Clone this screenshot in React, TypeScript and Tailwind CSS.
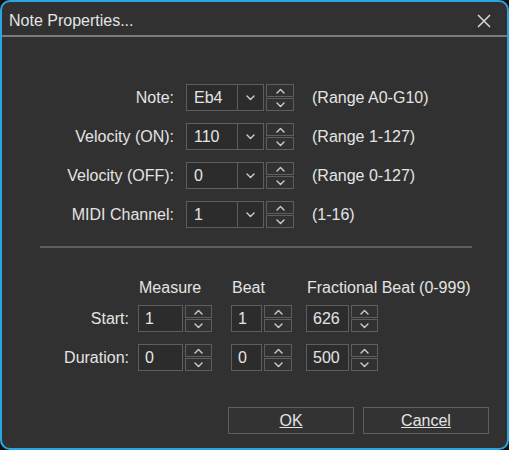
import React from 'react';

const Chevron: React.FC<{ up?: boolean }> = ({ up }) => (
  <svg width="9" height="6" viewBox="0 0 9 6" fill="none">
    <polyline
      points={up ? '1,5 4.5,1.5 8,5' : '1,1 4.5,4.5 8,1'}
      stroke="#cfcfcf"
      strokeWidth="1.4"
      strokeLinecap="round"
      strokeLinejoin="round"
    />
  </svg>
);

const Spinner: React.FC<{ w: string }> = ({ w }) => (
  <div className={`ml-[2px] ${w} h-[27px] flex flex-col gap-[1px]`}>
    <div className="flex-1 border border-[#5e5e5e] flex items-center justify-center">
      <Chevron up />
    </div>
    <div className="flex-1 border border-[#5e5e5e] flex items-center justify-center">
      <Chevron />
    </div>
  </div>
);

const ComboRow: React.FC<{ label: string; value: string; hint: string }> = ({ label, value, hint }) => (
  <div className="flex items-center h-[27px]">
    <div className="w-[172px] text-right">{label}</div>
    <div className="ml-[12px] w-[78px] h-[27px] flex border border-[#5e5e5e] bg-[#2c2c2c]">
      <div className="flex-1 pl-[7px] flex items-center">{value}</div>
      <div className="w-[26px] border-l border-[#5e5e5e] flex items-center justify-center">
        <Chevron />
      </div>
    </div>
    <Spinner w="w-[28px]" />
    <div className="ml-[18px]">{hint}</div>
  </div>
);

const Field: React.FC<{ value: string; w: string; ml: string }> = ({ value, w, ml }) => (
  <div className={`${ml} ${w} h-[27px] border border-[#5e5e5e] bg-[#2c2c2c] pl-[6px] flex items-center`}>
    {value}
  </div>
);

const TimeRow: React.FC<{ label: string; m: string; b: string; f: string }> = ({ label, m, b, f }) => (
  <div className="flex items-center h-[27px]">
    <div className="w-[127px] text-right">{label}</div>
    <Field value={m} w="w-[45px]" ml="ml-[9px]" />
    <Spinner w="w-[27px]" />
    <Field value={b} w="w-[31px]" ml="ml-[19px]" />
    <Spinner w="w-[28px]" />
    <Field value={f} w="w-[43px]" ml="ml-[14px]" />
    <Spinner w="w-[27px]" />
  </div>
);

export default function App() {
  return (
    <div className="w-[509px] h-[450px] bg-[#111]">
      <div className="w-full h-full rounded-[10px] border-2 border-[#2ba4e4] bg-[#313131] flex flex-col font-['Liberation_Sans',Arial,sans-serif] text-[16px] leading-[18px] text-[#e4e4e4]">
        <div className="h-[33px] flex items-center justify-between pl-[7px] pr-[16px]">
          <span className="pt-[4px]">Note Properties...</span>
          <svg width="14" height="14" viewBox="0 0 14 14" className="mt-[4px]">
            <path d="M1 1 L13 13 M13 1 L1 13" stroke="#d8d8d8" strokeWidth="1.5" />
          </svg>
        </div>
        <div className="h-[2px] bg-[#7c7c7c]" />

        <div className="mt-[47px] flex flex-col gap-[12px]">
          <ComboRow label="Note:" value="Eb4" hint="(Range A0-G10)" />
          <ComboRow label="Velocity (ON):" value="110" hint="(Range 1-127)" />
          <ComboRow label="Velocity (OFF):" value="0" hint="(Range 0-127)" />
          <ComboRow label="MIDI Channel:" value="1" hint="(1-16)" />
        </div>

        <div className="mt-[18px] ml-[38px] w-[432px] h-[2px] bg-[#5e5e5e]" />

        <div className="mt-[31px] flex pl-[137px]">
          <span className="w-[93px]">Measure</span>
          <span className="w-[75px]">Beat</span>
          <span>Fractional Beat (0-999)</span>
        </div>

        <div className="mt-[8px] flex flex-col gap-[12px]">
          <TimeRow label="Start:" m="1" b="1" f="626" />
          <TimeRow label="Duration:" m="0" b="0" f="500" />
        </div>

        <div className="mt-auto pb-[14px] pr-[18px] flex justify-end gap-[9px]">
          <button className="w-[126px] h-[27px] border border-[#5e5e5e] bg-[#333] underline">OK</button>
          <button className="w-[126px] h-[27px] border border-[#5e5e5e] bg-[#333] underline">Cancel</button>
        </div>
      </div>
    </div>
  );
}
